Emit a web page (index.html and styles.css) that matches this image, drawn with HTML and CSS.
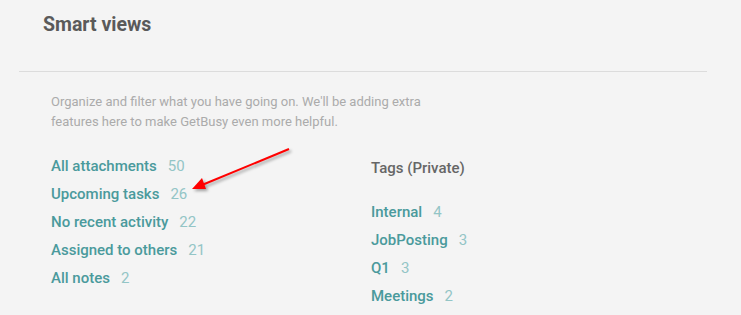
FILE: index.html
```html
<!DOCTYPE html>
<html>
<head>
<meta charset="utf-8">
<link rel="stylesheet" href="styles.css">
</head>
<body>
<div class="page">
  <h1 class="title">Smart views</h1>
  <div class="divider"></div>
  <div class="content">
    <p class="desc">Organize and filter what you have going on. We'll be adding extra<br>features here to make GetBusy even more helpful.</p>
    <div class="columns">
      <ul class="list left">
        <li><a class="link">All attachments</a><span class="count">50</span></li>
        <li><a class="link">Upcoming tasks</a><span class="count">26</span></li>
        <li><a class="link">No recent activity</a><span class="count">22</span></li>
        <li><a class="link">Assigned to others</a><span class="count">21</span></li>
        <li><a class="link">All notes</a><span class="count">2</span></li>
      </ul>
      <div class="tags">
        <div class="tags-head">Tags (Private)</div>
        <ul class="list">
          <li><a class="link">Internal</a><span class="count">4</span></li>
          <li><a class="link">JobPosting</a><span class="count">3</span></li>
          <li><a class="link">Q1</a><span class="count">3</span></li>
          <li><a class="link">Meetings</a><span class="count">2</span></li>
        </ul>
      </div>
    </div>
  </div>
  <svg class="arrow" width="741" height="315" viewBox="0 0 741 315">
    <g class="arrow-g">
      <line x1="289" y1="149" x2="202" y2="185" stroke="#ff0000" stroke-width="2"/>
      <polygon points="192,189 206,189 202,178" fill="#ff0000"/>
    </g>
  </svg>
</div>
</body>
</html>
```
FILE: styles.css
```css
html, body {
  margin: 0;
  padding: 0;
  background: #f4f4f4;
}
body {
  font-family: Roboto, "Liberation Sans", sans-serif;
}
.page {
  position: relative;
  width: 741px;
  height: 315px;
  overflow: hidden;
}
.title {
  margin: 0;
  padding: 13px 0 34px 43px;
  font-size: 19.5px;
  line-height: 24px;
  font-weight: 700;
  color: #5a5a5a;
}
.divider {
  height: 1px;
  background: #dcdcdc;
  margin: 0 34px 0 19px;
}
.content {
  padding: 0 0 0 51px;
}
.desc {
  margin: 20px 0 0 0;
  font-size: 13px;
  line-height: 20px;
  color: #ababab;
}
.columns {
  display: flex;
  margin-top: 20px;
}
.list {
  list-style: none;
  margin: 0;
  padding: 0;
}
.list li {
  font-size: 15px;
  line-height: 28px;
  white-space: nowrap;
}
.left {
  width: 320px;
}
.link {
  color: #4a9a9c;
  font-weight: 500;
}
.count {
  color: #93c5c6;
  margin-left: 11px;
}
.tags-head {
  font-size: 15px;
  line-height: 28px;
  font-weight: 500;
  color: #666;
  margin-top: 2px;
  margin-bottom: 16px;
}
.arrow {
  position: absolute;
  left: 0;
  top: 0;
  pointer-events: none;
}
.arrow-g {
  filter: drop-shadow(2px 2px 1.5px rgba(0, 0, 0, 0.35));
}
```
